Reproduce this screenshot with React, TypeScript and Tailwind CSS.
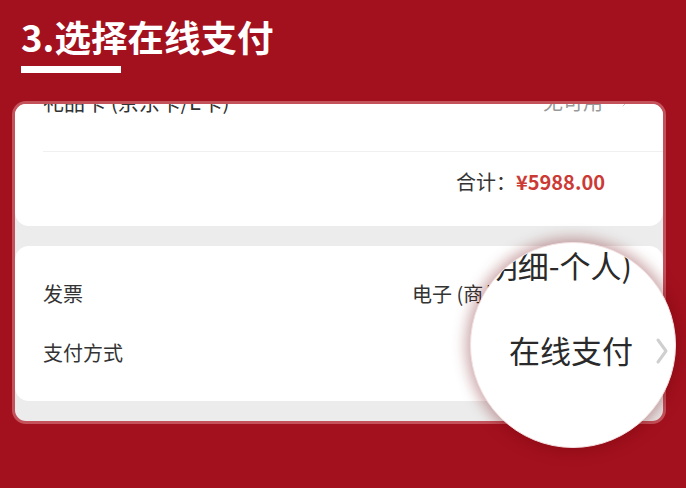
import { ChevronRight } from 'lucide-react'

const font = "font-['Noto_Sans_CJK_SC','Noto_Sans',sans-serif]"

const Row = ({ label, value }: { label: string; value: string }) => (
  <div className="flex h-[36px] items-center justify-between pl-[28px] pr-[40px]">
    <span className="text-[20px] leading-none text-[#333]">{label}</span>
    <span className="flex items-center gap-[10px] text-[20px] leading-none text-[#333]">
      {value}
      <ChevronRight size={16} strokeWidth={1.5} className="text-[#c4c4c4]" />
    </span>
  </div>
)

export default function App() {
  return (
    <div className={`relative h-[488px] w-[686px] overflow-hidden bg-[#a3111e] ${font}`}>
      <div className="px-[21px] pt-[19px]">
        <h1 className="text-[36.5px] font-bold leading-none text-white">3.选择在线支付</h1>
        <div className="mt-[10px] h-[7px] w-[100px] bg-white" />
      </div>

      <div className="ml-[12px] mt-[28px] h-[323px] w-[654px] overflow-hidden rounded-[14px] border-[3px] border-[#c4525b] bg-[#ececec]">
        <div className="h-[122px] overflow-hidden rounded-b-[14px] bg-white">
          <div className="-mt-[26px] flex h-[48px] items-center justify-between pl-[28px] pr-[30px]">
            <span className="text-[21px] leading-none text-[#333]">礼品卡 (京东卡/E卡)</span>
            <span className="flex items-center gap-[14px] text-[20px] leading-none text-[#999]">
              无可用
              <ChevronRight size={16} strokeWidth={1.5} className="text-[#c4c4c4]" />
            </span>
          </div>
          <div className="ml-[28px] mt-[25px] h-px bg-[#f0f0f0]" />
          <div className="mt-[10px] flex h-[40px] items-center justify-end pr-[58px] text-[20px] leading-none">
            <span className="text-[#333]">合计：</span>
            <span className="font-semibold text-[#cc3a36]">¥5988.00</span>
          </div>
        </div>

        <div className="mt-[20px] flex h-[155px] flex-col gap-[23px] rounded-[14px] bg-white py-[30px]">
          <Row label="发票" value="电子 (商品明细-个人)" />
          <Row label="支付方式" value="在线支付" />
        </div>
      </div>

      {/* magnifier */}
      <div className="absolute left-[470px] top-[242px] h-[206px] w-[206px] overflow-hidden rounded-full border border-[#f3e1e1] bg-white shadow-[0_0_14px_4px_rgba(110,0,10,0.35)]">
        <div className="absolute right-[43px] top-[6px] whitespace-nowrap text-[31px] leading-none text-[#2a2a2a]">
          电子 (商品明细-个人)
        </div>
        <div className="absolute left-[38px] top-[91px] whitespace-nowrap text-[31px] leading-none text-[#2a2a2a]">
          在线支付
        </div>
        <svg className="absolute left-[184px] top-[94px]" width="14" height="28" viewBox="0 0 14 28">
          <path d="M3 3 L11 14 L3 25" fill="none" stroke="#cfcfcf" strokeWidth="3" strokeLinecap="round" strokeLinejoin="round" />
        </svg>
      </div>
    </div>
  )
}
